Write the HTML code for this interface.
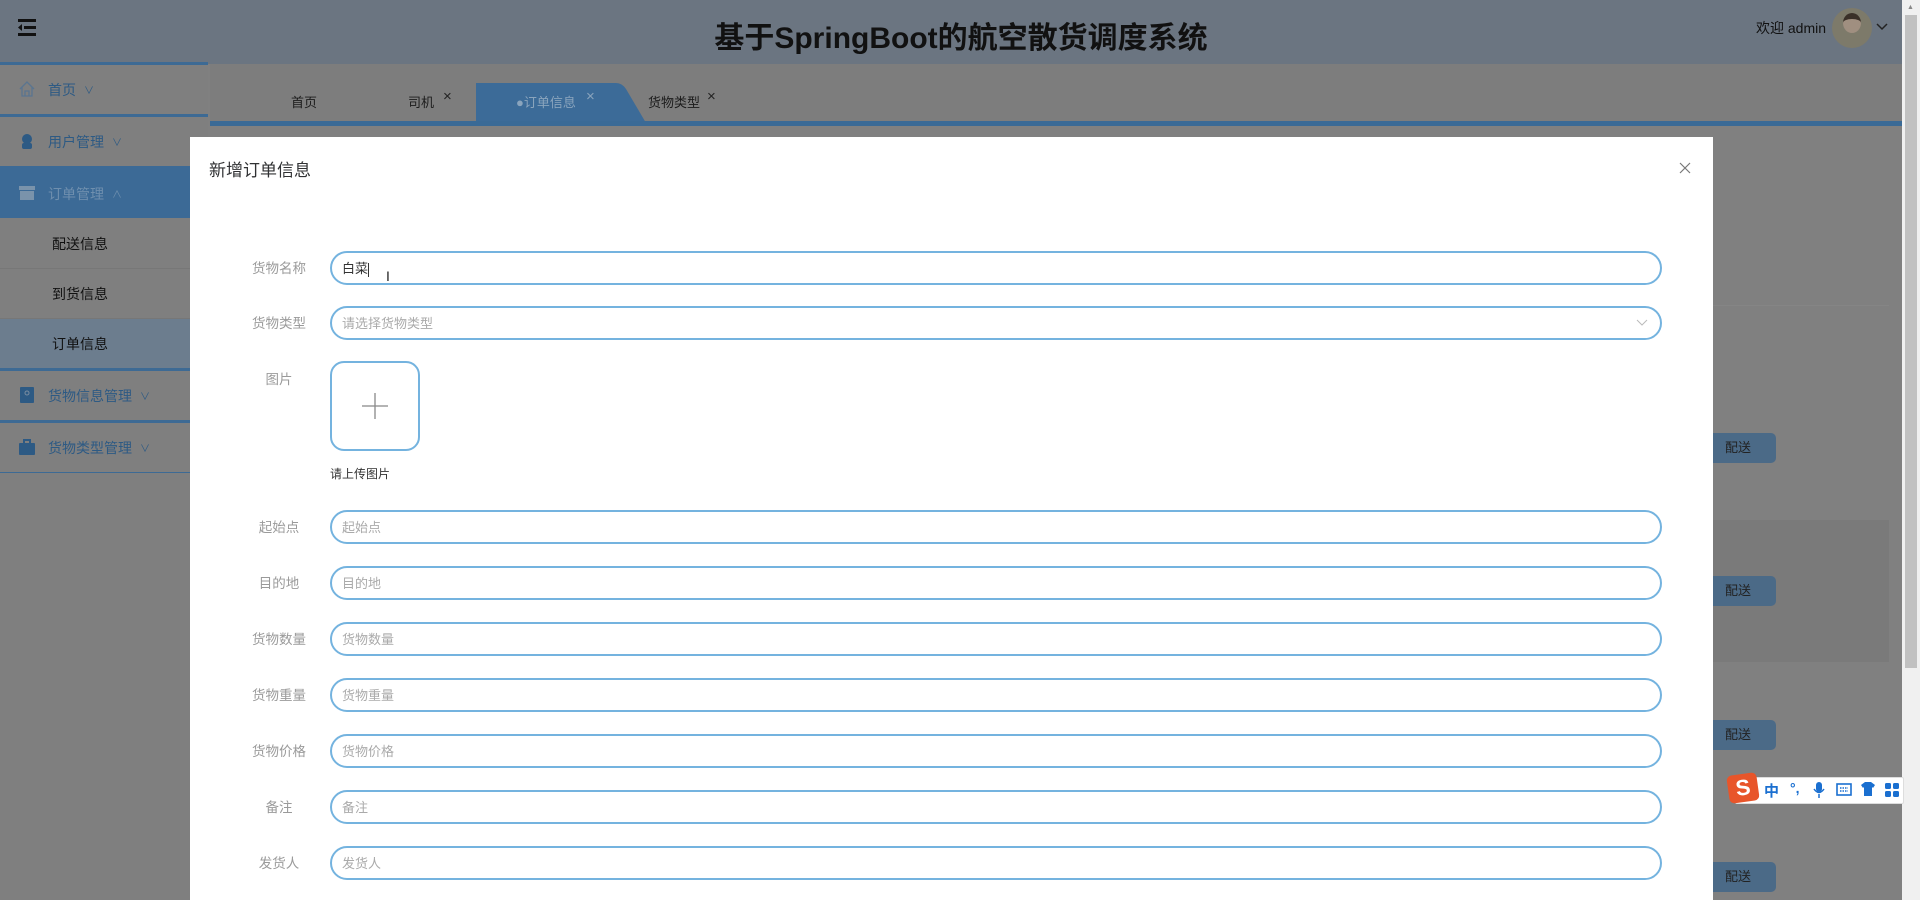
<!DOCTYPE html>
<html><head><meta charset="utf-8">
<style>
*{margin:0;padding:0;box-sizing:border-box}
body{width:1920px;height:900px;overflow:hidden;background:#808080;font-family:"Liberation Sans","Noto Sans CJK SC",sans-serif;position:relative}
.abs{position:absolute}
.hdr{left:0;top:0;width:1902px;height:64px;background:#6b7581}
.title{left:10px;width:1902px;top:13px;text-align:center;font-size:30px;font-weight:bold;color:#111}
.side{left:0;top:64px;width:208px;height:836px;background:#7f7f7f}
.mi{position:absolute;left:0;width:208px;height:52px;border-top:3px solid #3d6a94;font-size:14px;color:#2d5a84;display:flex;align-items:center;padding-left:48px}
.sub{position:absolute;left:0;width:208px;height:50px;font-size:14px;color:#111;padding-left:52px;display:flex;align-items:center;border-bottom:1px solid #777}
.ic{position:absolute;left:18px;width:18px;height:18px}
.tabs{left:210px;top:64px;width:1692px;height:62px;background:#7d7d7d}
.tabline{left:210px;top:121px;width:1692px;height:5px;background:#3a6a96}
.tab{position:absolute;top:92px;font-size:13px;color:#1c1c1c}
.x{font-size:15px;color:#222}
.modal{left:190px;top:137px;width:1523px;height:763px;background:#fff}
.lbl{position:absolute;left:240px;width:78px;text-align:center;font-size:13.5px;color:#9a9a9a}
.inp{position:absolute;left:330px;width:1332px;height:34px;border:2px solid #74b3df;border-radius:17px;font-size:13px;color:#aaa;padding-left:10px;line-height:31px}
.btn{position:absolute;left:1713px;width:63px;height:30px;background:#4b6a87;border-radius:0 5px 5px 0;font-size:13px;color:#222;padding-left:12px;line-height:30px}
</style></head><body>
<div class="abs hdr"></div>
<svg class="abs" style="left:18px;top:19px" width="20" height="18" viewBox="0 0 20 18"><rect x="0" y="0" width="18" height="3" fill="#111"/><rect x="6" y="7" width="12" height="3" fill="#111"/><rect x="0" y="14" width="18" height="3" fill="#111"/><path d="M4 5 L0 8.5 L4 12Z" fill="#111"/></svg>
<div class="abs title">基于SpringBoot的航空散货调度系统</div>
<div class="abs" style="left:1756px;top:18px;font-size:14px;color:#111">欢迎 admin</div>
<div class="abs" style="left:1832px;top:8px;width:40px;height:40px;border-radius:50%;background:#7d7a6a"></div>
<div class="abs" style="left:1843px;top:13px;width:18px;height:20px;border-radius:50%;background:#a08f80;border-top:6px solid #3a3028"></div>
<svg class="abs" style="left:1876px;top:22px" width="12" height="10"><path d="M1 2 L6 7 L11 2" stroke="#222" stroke-width="1.5" fill="none"/></svg>

<div class="abs side"></div>
<div class="mi" style="top:62px;"><svg class="ic" viewBox="0 0 18 18" style="top:15px"><path d="M2 9 L9 2 L16 9 M4 7 V16 H14 V7 M7 16 V11 H11 V16" stroke="#5a7590" fill="none" stroke-width="1.3"/></svg>首页 <span style="margin-left:8px;font-size:10px">∨</span></div>
<div class="mi" style="top:114px;"><svg class="ic" viewBox="0 0 18 18" style="top:15px"><circle cx="9" cy="7" r="5" fill="#2d5a84"/><rect x="4" y="11" width="10" height="6" rx="2" fill="#2d5a84"/></svg>用户管理 <span style="margin-left:8px;font-size:10px">∨</span></div>
<div class="mi" style="top:166px;background:#3c6a96;color:#6f8fae;border-top:3px solid #3c6a96"><svg class="ic" viewBox="0 0 18 18" style="top:15px"><rect x="1" y="2" width="16" height="4" fill="#7a93ab"/><rect x="2" y="7" width="14" height="9" fill="#7a93ab"/></svg>订单管理 <span style="margin-left:8px;font-size:10px">∧</span></div>
<div class="sub" style="top:219px">配送信息</div>
<div class="sub" style="top:269px">到货信息</div>
<div class="sub" style="top:319px;background:#6c7d8e;height:51px">订单信息</div>
<div class="mi" style="top:368px;"><svg class="ic" viewBox="0 0 18 18" style="top:15px"><rect x="2" y="1" width="14" height="16" rx="1" fill="#2d5a84"/><circle cx="9" cy="7" r="2" stroke="#7a8da0" fill="none"/></svg>货物信息管理 <span style="margin-left:8px;font-size:10px">∨</span></div>
<div class="mi" style="top:420px;"><svg class="ic" viewBox="0 0 18 18" style="top:15px"><rect x="1" y="5" width="16" height="12" rx="1" fill="#2d5a84"/><path d="M6 5 V2 H12 V5" stroke="#2d5a84" fill="none" stroke-width="2"/></svg>货物类型管理 <span style="margin-left:8px;font-size:10px">∨</span></div>
<div class="abs" style="left:0;top:472px;width:208px;height:1px;background:#3d6a94"></div>

<div class="abs tabs"></div>
<svg class="abs" style="left:476px;top:83px" width="170" height="40"><path d="M0 40 V0 H140 Q146 0 150 6 L170 40Z" fill="#3c6b98"/></svg>
<div class="abs tabline"></div>
<div class="tab" style="left:291px">首页</div>
<div class="tab" style="left:408px">司机</div><div class="tab x" style="left:443px;top:88px">×</div>
<div class="tab" style="left:516px;color:#8aa4bd">●订单信息</div><div class="tab x" style="left:586px;top:88px;color:#8aa4bd">×</div>
<div class="tab" style="left:648px">货物类型</div><div class="tab x" style="left:707px;top:88px">×</div>

<div class="abs" style="left:1713px;top:305px;width:176px;height:1px;background:#858585"></div>
<div class="abs" style="left:1713px;top:520px;width:176px;height:142px;background:#7a7a7a"></div>
<div class="btn" style="top:433px">配送</div>
<div class="btn" style="top:576px">配送</div>
<div class="btn" style="top:720px">配送</div>
<div class="btn" style="top:862px">配送</div>

<div class="abs modal"></div>
<div class="abs" style="left:209px;top:156px;font-size:17px;color:#303133">新增订单信息</div>
<svg class="abs" style="left:1679px;top:162px" width="12" height="12"><path d="M1 1 L11 11 M11 1 L1 11" stroke="#777" stroke-width="1.2"/></svg>

<div class="lbl" style="top:257px">货物名称</div><div class="inp" style="top:251px;color:#333">白菜<span style="display:inline-block;width:1px;height:14px;background:#333;vertical-align:middle"></span></div>
<div class="abs" style="left:386px;top:268px;font-size:14px;color:#222">I</div>
<div class="lbl" style="top:312px">货物类型</div><div class="inp" style="top:306px">请选择货物类型<svg style="position:absolute;right:12px;top:11px" width="12" height="8"><path d="M1 1 L6 6 L11 1" stroke="#bbb" fill="none"/></svg></div>
<div class="lbl" style="top:368px">图片</div>
<div class="abs" style="left:330px;top:361px;width:90px;height:90px;border:2px solid #74b3df;border-radius:14px"></div>
<svg class="abs" style="left:360px;top:391px" width="30" height="30"><path d="M15 2 V28 M2 15 H28" stroke="#888" stroke-width="1.3"/></svg>
<div class="abs" style="left:330px;top:465px;font-size:12px;color:#333">请上传图片</div>

<div class="lbl" style="top:516px">起始点</div><div class="inp" style="top:510px">起始点</div>
<div class="lbl" style="top:572px">目的地</div><div class="inp" style="top:566px">目的地</div>
<div class="lbl" style="top:628px">货物数量</div><div class="inp" style="top:622px">货物数量</div>
<div class="lbl" style="top:684px">货物重量</div><div class="inp" style="top:678px">货物重量</div>
<div class="lbl" style="top:740px">货物价格</div><div class="inp" style="top:734px">货物价格</div>
<div class="lbl" style="top:796px">备注</div><div class="inp" style="top:790px">备注</div>
<div class="lbl" style="top:852px">发货人</div><div class="inp" style="top:846px">发货人</div>

<div class="abs" style="left:1902px;top:0;width:18px;height:900px;background:#f0f0f0"></div>
<div class="abs" style="left:1905px;top:15px;width:12px;height:653px;background:#c1c1c1"></div>
<div class="abs" style="left:1907px;top:4px;font-size:7px;color:#888">▲</div>

<div class="abs" style="left:1735px;top:777px;width:169px;height:27px;background:#fff;border:1px solid #ddd;border-radius:2px"></div>
<div class="abs" style="left:1728px;top:774px;width:30px;height:28px;background:#e8552a;border-radius:5px;transform:rotate(-8deg);color:#fff;font-weight:bold;font-size:22px;text-align:center;line-height:28px">S</div>
<div class="abs" style="left:1764px;top:780px;font-size:15px;font-weight:bold;color:#1a6fd0">中</div>
<div class="abs" style="left:1790px;top:780px;font-size:14px;font-weight:bold;color:#1a6fd0">°,</div>
<svg class="abs" style="left:1812px;top:781px" width="14" height="18"><rect x="4" y="1" width="6" height="10" rx="3" fill="#1a6fd0"/><path d="M2 8 Q7 15 12 8 M7 13 V17" stroke="#1a6fd0" fill="none" stroke-width="1.5"/></svg>
<svg class="abs" style="left:1836px;top:783px" width="16" height="13"><rect x="1" y="1" width="14" height="11" fill="none" stroke="#1a6fd0" stroke-width="1.6"/><path d="M4 5 H12 M4 8 H12" stroke="#1a6fd0" stroke-width="1.4" stroke-dasharray="1.5 1"/></svg>
<svg class="abs" style="left:1860px;top:781px" width="16" height="16"><path d="M1 4 L5 1 H11 L15 4 L13 7 L12 6 V15 H4 V6 L3 7Z" fill="#1a6fd0"/></svg>
<svg class="abs" style="left:1885px;top:783px" width="14" height="14"><rect x="0" y="0" width="6" height="6" rx="1.5" fill="#1a6fd0"/><rect x="8" y="0" width="6" height="6" rx="1.5" fill="#1a6fd0"/><rect x="0" y="8" width="6" height="6" rx="1.5" fill="#1a6fd0"/><rect x="8" y="8" width="6" height="6" rx="1.5" fill="#1a6fd0"/></svg>
</body></html>
